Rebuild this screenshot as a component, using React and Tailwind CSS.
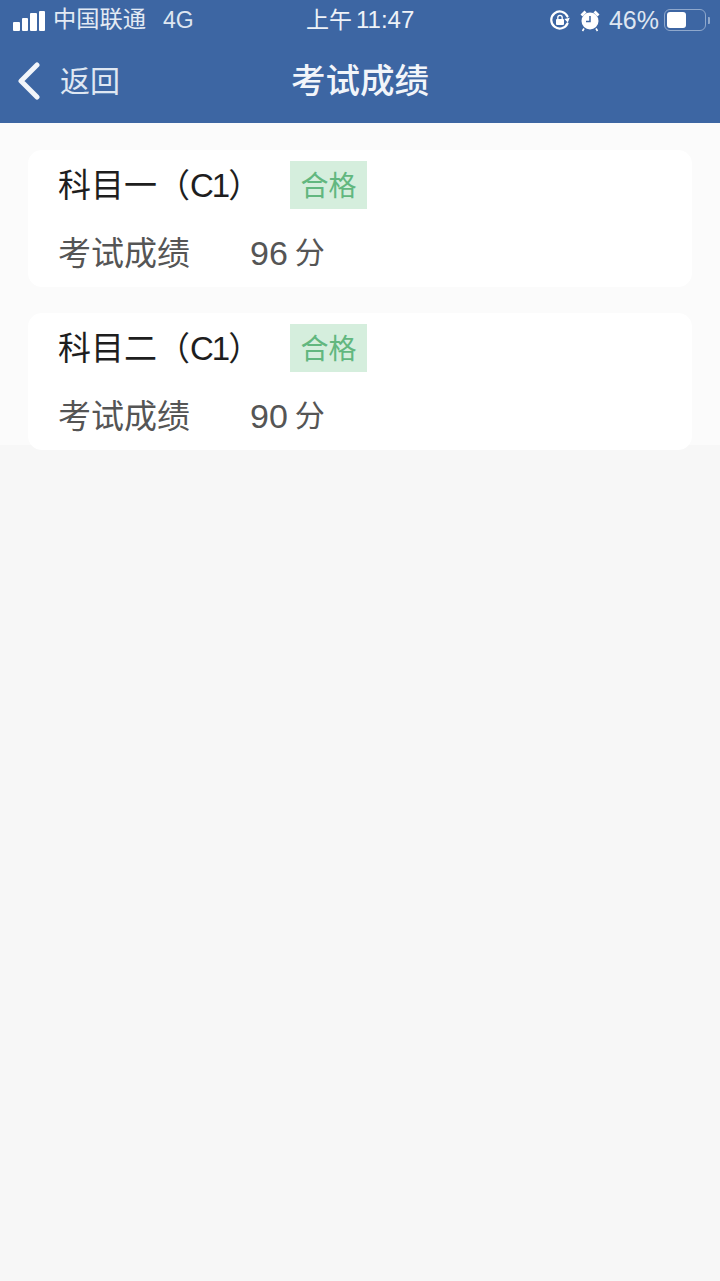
const FONT = "font-['Liberation_Sans','Noto_Sans_CJK_SC',sans-serif]";

function SignalBars() {
  return (
    <div className="flex items-end gap-[2px] h-[21px]">
      <span className="w-[6.5px] h-[9px] rounded-[1px] bg-white" />
      <span className="w-[6.5px] h-[13px] rounded-[1px] bg-white" />
      <span className="w-[6.5px] h-[18px] rounded-[1px] bg-white" />
      <span className="w-[6.5px] h-[20px] rounded-[1px] bg-white" />
    </div>
  );
}

function RotationLock() {
  return (
    <svg width="22" height="22" viewBox="0 0 22 22" fill="none">
      <path d="M18.5 14.5A8.5 8.5 0 1 1 18.5 7.5" stroke="#fff" strokeWidth="2.2" strokeLinecap="round" />
      <path d="M20.8 8.8 18.8 13.6 15.4 10Z" fill="#fff" />
      <rect x="7" y="10" width="8" height="6" rx="1" fill="#fff" />
      <path d="M8.8 10V8.6a2.2 2.2 0 0 1 4.4 0V10" stroke="#fff" strokeWidth="1.3" />
    </svg>
  );
}

function Alarm() {
  return (
    <svg width="22" height="24" viewBox="0 0 22 24" fill="none">
      <circle cx="11" cy="13" r="8.5" fill="#fff" />
      <path d="M11 8v5.5H7" stroke="#3d66a3" strokeWidth="1.5" />
      <path d="M1.5 6.5 5.5 2.5 7.5 4.5 3.5 8.5Z" fill="#fff" />
      <path d="M20.5 6.5 16.5 2.5 14.5 4.5 18.5 8.5Z" fill="#fff" />
      <path d="M5 20.5 3.5 23M17 20.5 18.5 23" stroke="#fff" strokeWidth="1.6" />
    </svg>
  );
}

function Battery() {
  return (
    <div className="flex items-center gap-[2px]">
      <div className="w-[42px] h-[22px] rounded-[6px] border-[1.5px] border-[#8fa8cc] p-[2px]">
        <div className="w-[19px] h-full rounded-[3px] bg-white" />
      </div>
      <span className="w-[2px] h-[7px] rounded-r-[1px] bg-[#8fa8cc]" />
    </div>
  );
}

function StatusBar() {
  return (
    <div className="relative h-[40px] flex items-center justify-between pl-[13px] pr-[10px] text-white">
      <div className="flex items-center">
        <SignalBars />
        <span className="ml-[8px] text-[23.25px] leading-none text-[#e3eaf4]">中国联通</span>
        <span className="ml-[17px] text-[23px] leading-none text-[#dfe6f1]">4G</span>
      </div>
      {/* clock sits over the bar, not part of the left/right flow */}
      <div className="absolute left-[306px] top-[8px] flex items-center gap-[4px] text-[#eef2f8] leading-none">
        <span className="text-[23px]">上午</span>
        <span className="text-[24px]">11:47</span>
      </div>
      <div className="flex items-center">
        <RotationLock />
        <span className="ml-[8px]"><Alarm /></span>
        <span className="ml-[8px] text-[25px] leading-none text-[#dfe6f1]">46%</span>
        <span className="ml-[5px]"><Battery /></span>
      </div>
    </div>
  );
}

function NavBar() {
  return (
    <div className="relative h-[83px] flex items-center justify-center text-white">
      <div className="absolute left-[16px] top-[22px] flex items-center">
        <svg width="25" height="38" viewBox="0 0 25 38" fill="none">
          <path d="M21 3 5 19l16 16" stroke="#f2f5fa" strokeWidth="5" strokeLinecap="round" strokeLinejoin="round" />
        </svg>
        <span className="ml-[19px] mt-[1px] text-[30px] leading-none text-[#dfe7f2]">返回</span>
      </div>
      <h1 className="text-[34.5px] leading-none font-medium mb-[1px] text-[#f2f5fa]">考试成绩</h1>
    </div>
  );
}

function ScoreCard({ subject, score }) {
  return (
    <div className="shrink-0 mx-[28px] h-[137px] rounded-[14px] bg-white pl-[30px] pt-[11px]">
      <div className="flex items-center h-[48px]">
        <span className="w-[232px] text-[33px] leading-none text-[#1e1e1e]">
          {subject}（<span className="tracking-[-2px]">C1</span>）
        </span>
        <span className="w-[77px] h-[48px] pt-[3px] flex items-center justify-center bg-[#d5eedd] text-[28px] leading-none text-[#62b77f]">合格</span>
      </div>
      <div className="flex items-center mt-[20px] h-[48px] text-[#555555]">
        <span className="w-[192px] text-[33px] leading-none">考试成绩</span>
        <span className="text-[34px] leading-none">{score}</span>
        <span className="ml-[7px] text-[30px] leading-none">分</span>
      </div>
    </div>
  );
}

export default function App() {
  return (
    <div className={`${FONT} w-[720px] h-[1281px] overflow-hidden bg-[#f7f7f7]`}>
      <div className="h-[123px] bg-[#3d66a3]">
        <StatusBar />
        <NavBar />
      </div>
      <div className="h-[322px] bg-[#fbfbfb] pt-[27px] flex flex-col gap-[26px]">
        <ScoreCard subject="科目一" score="96" />
        <ScoreCard subject="科目二" score="90" />
      </div>
    </div>
  );
}
